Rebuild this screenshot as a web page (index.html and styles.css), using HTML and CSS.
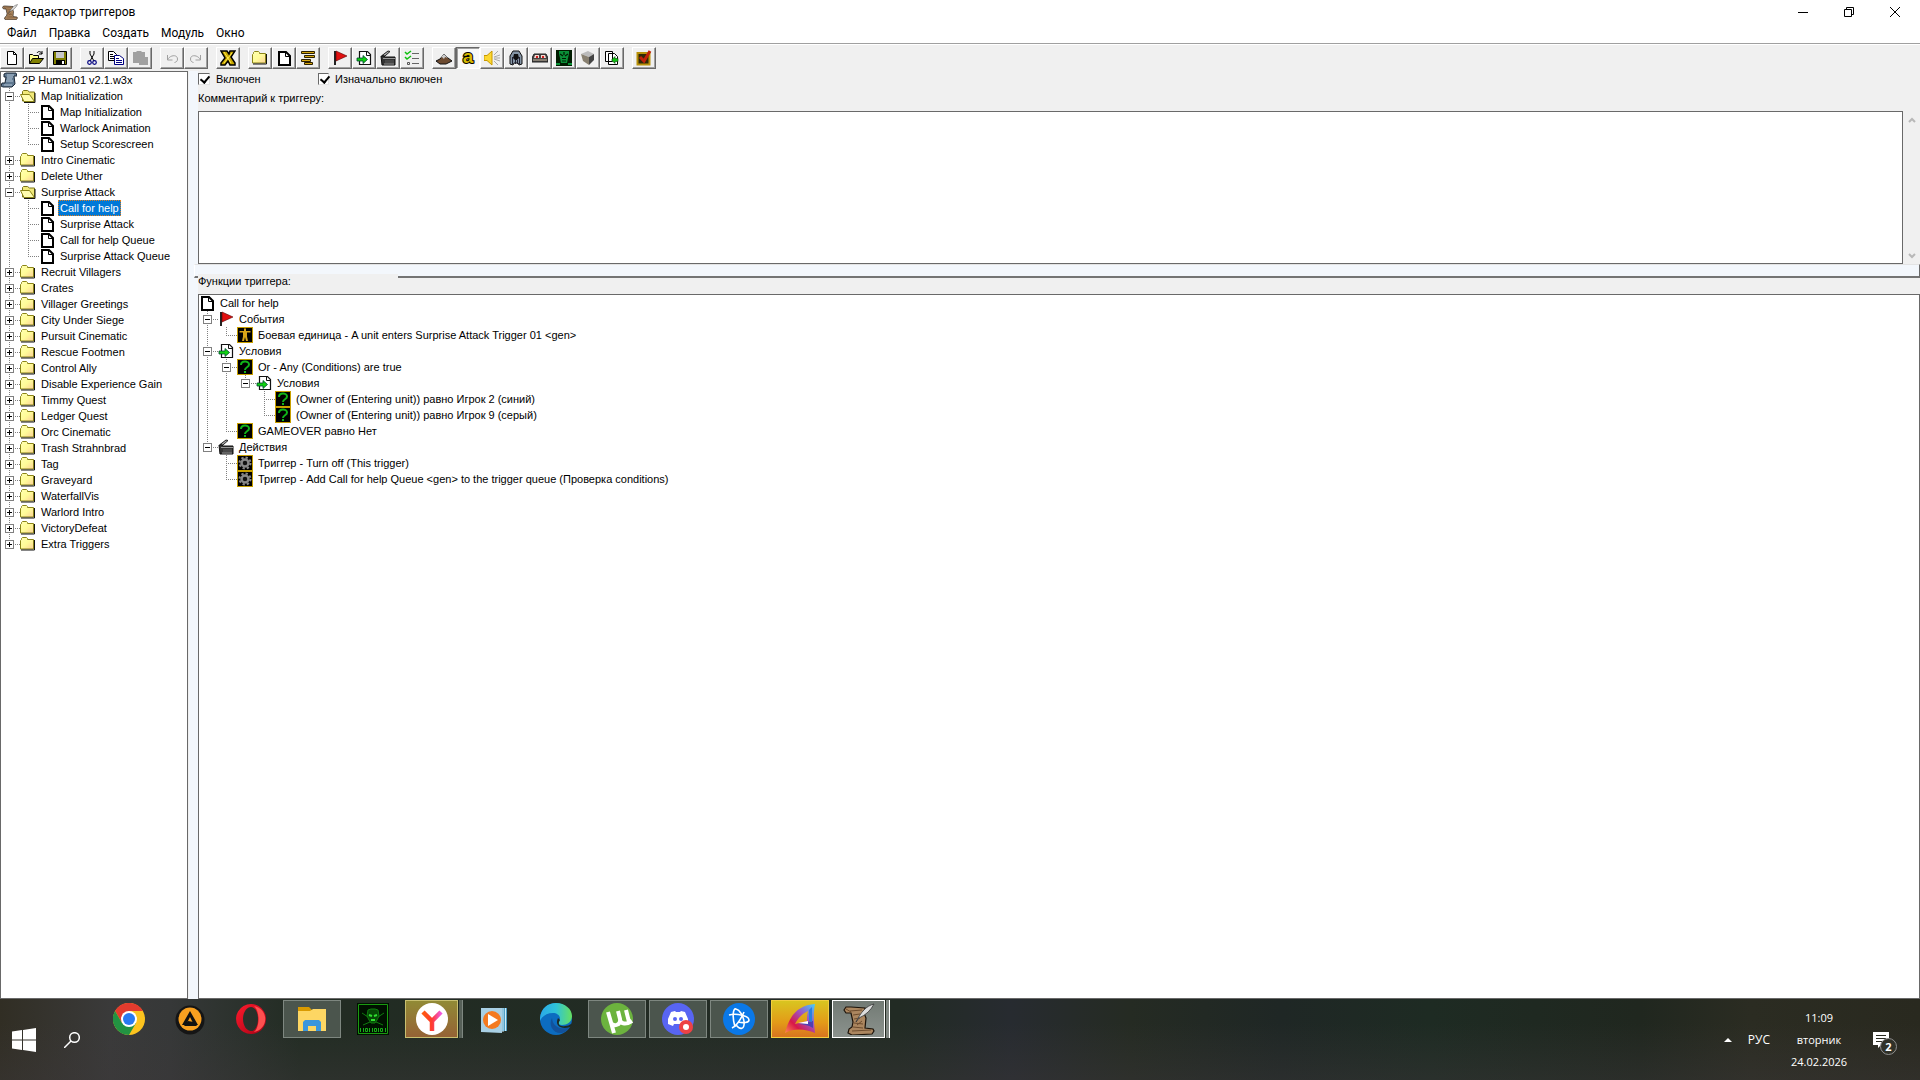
FILE: index.html
```
<!DOCTYPE html>
<html lang="ru">
<head>
    <meta charset="UTF-8">
    <meta name="viewport" content="width=device-width, initial-scale=1.0">
    <title>Редактор триггеров</title>
    <link rel="stylesheet" href="styles.css">
</head>
<body>

<!-- shared icons -->
<svg class="sprite" aria-hidden="true">
    <defs>
        <linearGradient id="gGold" x1="0" y1="0" x2="1" y2="1"><stop offset="0" stop-color="#ffffb0"/><stop offset=".5" stop-color="#fffc98"/><stop offset="1" stop-color="#fcd098"/></linearGradient>
        <linearGradient id="gOpera" x1="0" y1="0" x2="1" y2="1"><stop offset="0" stop-color="#ff1b2d"/><stop offset="1" stop-color="#a70014"/></linearGradient>
        <linearGradient id="gEdge" x1="0" y1="0" x2="1" y2="0"><stop offset="0" stop-color="#2aa8e8"/><stop offset=".5" stop-color="#2fc3d8"/><stop offset="1" stop-color="#66e060"/></linearGradient>
        <linearGradient id="gYan" x1="0" y1="0" x2="1" y2="0"><stop offset="0" stop-color="#ff5a10"/><stop offset=".5" stop-color="#ff3b30"/><stop offset="1" stop-color="#f05ae0"/></linearGradient>
        <linearGradient id="gSail" x1="0" y1="1" x2="1" y2="0"><stop offset="0" stop-color="#ff8a50"/><stop offset=".3" stop-color="#d81848"/><stop offset=".6" stop-color="#a050c0"/><stop offset="1" stop-color="#40d0ff"/></linearGradient>
    </defs>
    <symbol id="folder" viewBox="0 0 16 16">
        <path d="M.5 4.500l1-1V2.500l1-1h4l1 1v1h6v9.500H.5z" fill="url(#gGold)" stroke="#8a8418"/>
        <path d="M1 14h13.500V4" fill="none" stroke="#111"/>
    </symbol>
    <symbol id="folder-open" viewBox="0 0 16 16">
        <path d="M2.500 13V3.500l1-1h4l2 1.500h5V13z" fill="#f0e878" stroke="#7a7418"/>
        <path d="M.5 6.500h9l5 7H4z" fill="#fffcb0" stroke="#8a8418"/>
        <path d="M4 14.500h11V5" fill="none" stroke="#111"/>
    </symbol>
    <symbol id="doc" viewBox="0 0 16 16">
        <path d="M3 2h7l4 4v9H3z" fill="#fff" stroke="#000" stroke-width="2"/>
        <path d="M9.500 2v4.500H14" fill="none" stroke="#000"/>
    </symbol>
    <symbol id="page" viewBox="0 0 16 16">
        <path d="M3.500 1.500h6l3 3v10h-9z" fill="#fff" stroke="#000"/>
        <path d="M9.500 1.500v3h3" fill="none" stroke="#000"/>
    </symbol>
    <symbol id="flag" viewBox="0 0 16 16">
        <path d="M2 1h2v14H2z" fill="#222"/><path d="M4 1l11 5-11 5z" fill="#e01010" stroke="#500" stroke-width=".6"/>
    </symbol>
    <symbol id="cond" viewBox="0 0 16 16">
        <path d="M3.500 1.500h8l3 3v10h-11z" fill="#fff" stroke="#111" stroke-width="1.200"/>
        <path d="M10.500 2v3.500H14" fill="none" stroke="#111"/>
        <path d="M1 8h6V5.500l4.500 4-4.500 4v-2.500H1z" fill="#10d010" stroke="#043" stroke-width=".8"/>
    </symbol>
    <symbol id="clap" viewBox="0 0 16 16">
        <path d="M2 5.500l6-4.500 2 .5L5 6z" fill="#aaa" stroke="#222"/>
        <path d="M1 6h3l1 1h10v8H2z" fill="#333" stroke="#111"/>
        <path d="M3 8.500h12M4 14h10" stroke="#999"/><path d="M5 10h9v3H5z" fill="#484848"/>
    </symbol>
    <symbol id="quest" viewBox="0 0 16 16">
        <rect x=".5" y=".5" width="15" height="15" fill="#000" stroke="#c8a000"/>
        <path d="M4 6c0-4.500 8-4.500 8-.5 0 3-4 2.500-4 5.500" fill="none" stroke="#10b418" stroke-width="2"/>
        <path d="M7 12h2v2H7z" fill="#10b418"/>
    </symbol>
    <symbol id="unit" viewBox="0 0 16 16">
        <rect x=".5" y=".5" width="15" height="15" fill="#000" stroke="#c8a000"/>
        <path d="M7 1.500h2v2.500h4.500v1.500H10v4l1 4.500H9L8 10l-1 4H5l1-4.500v-4H2.500V4H7z" fill="#d8a418"/>
    </symbol>
    <symbol id="gear" viewBox="0 0 16 16">
        <rect x=".5" y=".5" width="15" height="15" fill="#000" stroke="#c8a000"/>
        <circle cx="8" cy="8" r="5.500" fill="none" stroke="#888" stroke-width="2" stroke-dasharray="2.300 2"/>
        <circle cx="8" cy="8" r="3.500" fill="#111" stroke="#888" stroke-width="2.500"/>
    </symbol>
    <symbol id="map" viewBox="0 0 16 16">
        <path d="M3 2l2-1h10l1 3h-3l1 8-3 3H2l-2-1 1-3h3L5 5H3z" fill="#5f7890" stroke="#1c2836"/>
        <path d="M6 3h7M6 5h6M6 7h5M5 9h7M3 13h8" stroke="#b4c4d4"/>
    </symbol>
    <symbol id="scroll" viewBox="0 0 32 32">
        <path d="M1 7l2-3h5l14 1-1 5 2 5-1 10 8 1 1 2-2 3-20 1-4-2 1-4 3-2 1-5-2-9H3z" fill="#ab865f" stroke="#1c130a" stroke-width="1.200"/>
        <path d="M7 8l12-1M10 12l7-1M11 16l6-1M11 20l9 1M10 24l10 1M9 28l19-1M3 6l5 3M14 22l5-4" stroke="#6d4c2e" fill="none"/>
        <path d="M13 19C18 9 23 3 31 1c-3 6-8 11-15 14z" fill="#ddd" stroke="#333" stroke-width=".8"/>
    </symbol>
</svg>

<header class="titlebar">
    <svg class="icon"><use href="#scroll"/></svg>
    <h1>Редактор триггеров</h1>
    <div class="window-buttons">
        <button aria-label="Свернуть"><svg viewBox="0 0 10 10"><path d="M0 5.500h10"/></svg></button>
        <button aria-label="Развернуть"><svg viewBox="0 0 10 10"><path d="M.5 2.500h7v7h-7zM2.500 2.500v-2h7v7h-2"/></svg></button>
        <button aria-label="Закрыть"><svg viewBox="0 0 10 10"><path d="M0 0l10 10M10 0L0 10"/></svg></button>
    </div>
</header>

<nav class="menu">
    <button>Файл</button>
    <button>Правка</button>
    <button>Создать</button>
    <button>Модуль</button>
    <button>Окно</button>
</nav>

<div class="toolbar">
    <div class="group">
        <button aria-label="Новый"><svg class="icon"><use href="#page"/></svg></button>
        <button aria-label="Открыть"><svg class="icon" viewBox="0 0 16 16"><path d="M1.500 13.500v-9h3l1 1h5v3" fill="#ffff90" stroke="#000"/><path d="M1.500 13.500l3-5h11l-4 5z" fill="#808000" stroke="#000"/><path d="M9 3c1-2 4-2 5 1m0-3v3h-3" fill="none" stroke="#000"/></svg></button>
        <button aria-label="Сохранить"><svg class="icon" viewBox="0 0 16 16"><path d="M1.500 1.500h13v13h-13z" fill="#808000" stroke="#000"/><path d="M4 2h8v6H4z" fill="#c8c8c8"/><path d="M4 10h9v4H4z" fill="#000"/><path d="M10 11h2v3h-2z" fill="#fff"/></svg></button>
    </div>
    <div class="group">
        <button aria-label="Вырезать"><svg class="icon" viewBox="0 0 16 16"><path d="M6 1v3l4 7M10 1v3L6 11" fill="none" stroke="#000"/><circle cx="5.500" cy="12.500" r="1.800" fill="none" stroke="#000080" stroke-width="1.200"/><circle cx="10.500" cy="12.500" r="1.800" fill="none" stroke="#000080" stroke-width="1.200"/></svg></button>
        <button aria-label="Копировать"><svg class="icon" viewBox="0 0 16 16"><path d="M.5 1.500h5l3 3v6h-8z" fill="#fff" stroke="#000"/><path d="M2 4.500h3M2 6.500h4M2 8.500h4" stroke="#000"/><path d="M6.500 5.500h5l4 3v6h-9z" fill="#fff" stroke="#000080"/><path d="M8 8.500h3M8 10.500h6M8 12.500h6" stroke="#000080"/></svg></button>
        <button aria-label="Вставить" disabled><svg class="icon" viewBox="0 0 16 16"><path d="M1 2h3l1-1h4l1 1h3v5h3v8H7v-2H1z" fill="#a0a0a0"/></svg></button>
    </div>
    <div class="group">
        <button aria-label="Отменить" disabled><svg class="icon" viewBox="0 0 16 16"><path d="M3.500 5v5h5M3.500 10c2-5 10-6 10-1 0 2-1 3-3 3.500" fill="none" stroke="#a0a0a0"/></svg></button>
        <button aria-label="Повторить" disabled><svg class="icon" viewBox="0 0 16 16"><path d="M12.500 5v5h-5M12.500 10c-2-5-10-6-10-1 0 2 1 3 3 3.500" fill="none" stroke="#a0a0a0"/></svg></button>
    </div>
    <div class="group">
        <button aria-label="Переменные"><svg class="icon" viewBox="0 0 16 16"><path d="M1 1h6l2 3 1-3h5l-4 6 4 6v2h-5l-2-4-3 4H1v-2l4-5z" fill="#c8a800" stroke="#000" stroke-width="1.500"/><path d="M4 2l7 11M12 3L4 13" stroke="#ffe850" stroke-width="1"/></svg></button>
    </div>
    <div class="group">
        <button aria-label="Категория"><svg class="icon"><use href="#folder"/></svg></button>
        <button aria-label="Триггер"><svg class="icon"><use href="#doc"/></svg></button>
        <button aria-label="Комментарий"><svg class="icon" viewBox="0 0 16 16"><path d="M1.500 1.500h13v2h-13zM4.500 5.500h10v2h-10zM1.500 9.500h9v2h-9zM4.500 12.500h8v2h-8z" fill="#d8a810" stroke="#2c2000"/></svg></button>
    </div>
    <div class="group">
        <button aria-label="Событие"><svg class="icon"><use href="#flag"/></svg></button>
        <button aria-label="Условие"><svg class="icon"><use href="#cond"/></svg></button>
        <button aria-label="Действие"><svg class="icon"><use href="#clap"/></svg></button>
        <button aria-label="Список"><svg class="icon" viewBox="0 0 16 16"><path d="M1 2l2 2 4-3M1 7l2 2 4-3" fill="none" stroke="#10c010" stroke-width="1.500"/><path d="M8 3.500h7M8 8.500h7M8 13.500h7" stroke="#666"/><path d="M3.500 12.500h2v2h-2z" fill="none" stroke="#555"/></svg></button>
    </div>
    <div class="group">
        <button aria-label="Рельеф"><svg class="icon" viewBox="0 0 16 16"><path d="M0 11l4-2 4-5 4 4 4 3-6 3H4z" fill="#6c4a30" stroke="#111"/><path d="M8 4l4 4-3-1-1 2-2-2-2 1z" fill="#ccc"/></svg></button>
        <button class="pressed letter" aria-label="Редактор триггеров">a</button>
        <button aria-label="Звуки"><svg class="icon" viewBox="0 0 16 16"><path d="M0 5.500h3L8 1v14l-5-4.500H0z" fill="#fcd830" stroke="#c89800"/><path d="M10 5l4-4M10 8h6M10 11l4 4M10 7l6-2M10 9l6 2" stroke="#aaa"/></svg></button>
        <button aria-label="Объекты"><svg class="icon" viewBox="0 0 16 16"><path d="M5 1h6l3 5v8l-3 1-1-2H6l-1 2-3-1V6z" fill="#8595a5" stroke="#111"/><path d="M6 4h4l1 4-2 2H7L5 8z" fill="#111"/><path d="M4.500 7v7M11.500 7v7M7.500 10v4M9.500 10v4" stroke="#223"/></svg></button>
        <button aria-label="Кампания"><svg class="icon" viewBox="0 0 16 16"><path d="M2 4h12l2 4v4H0V8z" fill="#444" stroke="#222"/><path d="M3 5h4v3H2zM9 5h4l1 3H9z" fill="#f4d8d0"/><path d="M4 6h2v2H4zM10 6h2v2h-2z" fill="#d02020"/><path d="M1 10h14" stroke="#c8b8a0"/></svg></button>
        <button aria-label="ИИ"><svg class="icon" viewBox="0 0 16 16"><path d="M0 0h16v16H0z" fill="#001c00"/><path d="M3 1h10v3l-1 4-1 5H5L4 8 3 4zM0 13h4v2H0zM12 13h4v2h-4z" fill="#0a9038"/><path d="M4 4l3 2M12 4L9 6M6 8.500h4M6 11h4M8 2v3" stroke="#001c00" stroke-width="1.200"/></svg></button>
        <button aria-label="Менеджер объектов"><svg class="icon" viewBox="0 0 16 16"><path d="M1 4l7-3 6 3-5 3z" fill="#bbb"/><path d="M1 4l8 3v8l-6-4z" fill="#888070"/><path d="M14 4l-5 3v8l5-5z" fill="#444"/></svg></button>
        <button aria-label="Импорт"><svg class="icon" viewBox="0 0 16 16"><path d="M1.500 1.500h7v10h-7zM4.500 3.500h6l3 3v8h-9z" fill="#fff" stroke="#000"/><path d="M14 8.500h-3V6.500l-3.500 3.500 3.500 3.500v-2h3z" fill="#10c010" stroke="#040" stroke-width=".6"/></svg></button>
    </div>
    <div class="group">
        <button aria-label="Проверка карты"><svg class="icon" viewBox="0 0 16 16"><path d="M1.500 3h12v11.500h-12z" fill="#302808" stroke="#b89008" stroke-width="2"/><path d="M4 7l4 4 6-10" fill="none" stroke="#c02008" stroke-width="3"/></svg></button>
    </div>
</div>

<main class="workspace">
    <aside class="panel trigger-list">
        <div class="tree">
            <div class="row"><svg class="icon"><use href="#map"/></svg><span>2P Human01 v2.1.w3x</span></div>
            <ul>
                <li>
                    <div class="row"><button class="toggle" aria-label="Свернуть"></button><svg class="icon"><use href="#folder-open"/></svg><span>Map Initialization</span></div>
                    <ul>
                        <li><div class="row"><svg class="icon"><use href="#doc"/></svg><span>Map Initialization</span></div></li>
                        <li><div class="row"><svg class="icon"><use href="#doc"/></svg><span>Warlock Animation</span></div></li>
                        <li><div class="row"><svg class="icon"><use href="#doc"/></svg><span>Setup Scorescreen</span></div></li>
                    </ul>
                </li>
                <li><div class="row"><button class="toggle closed" aria-label="Развернуть"></button><svg class="icon"><use href="#folder"/></svg><span>Intro Cinematic</span></div></li>
                <li><div class="row"><button class="toggle closed" aria-label="Развернуть"></button><svg class="icon"><use href="#folder"/></svg><span>Delete Uther</span></div></li>
                <li>
                    <div class="row"><button class="toggle" aria-label="Свернуть"></button><svg class="icon"><use href="#folder-open"/></svg><span>Surprise Attack</span></div>
                    <ul>
                        <li><div class="row"><svg class="icon"><use href="#doc"/></svg><span class="selected">Call for help</span></div></li>
                        <li><div class="row"><svg class="icon"><use href="#doc"/></svg><span>Surprise Attack</span></div></li>
                        <li><div class="row"><svg class="icon"><use href="#doc"/></svg><span>Call for help Queue</span></div></li>
                        <li><div class="row"><svg class="icon"><use href="#doc"/></svg><span>Surprise Attack Queue</span></div></li>
                    </ul>
                </li>
                <li><div class="row"><button class="toggle closed" aria-label="Развернуть"></button><svg class="icon"><use href="#folder"/></svg><span>Recruit Villagers</span></div></li>
                <li><div class="row"><button class="toggle closed" aria-label="Развернуть"></button><svg class="icon"><use href="#folder"/></svg><span>Crates</span></div></li>
                <li><div class="row"><button class="toggle closed" aria-label="Развернуть"></button><svg class="icon"><use href="#folder"/></svg><span>Villager Greetings</span></div></li>
                <li><div class="row"><button class="toggle closed" aria-label="Развернуть"></button><svg class="icon"><use href="#folder"/></svg><span>City Under Siege</span></div></li>
                <li><div class="row"><button class="toggle closed" aria-label="Развернуть"></button><svg class="icon"><use href="#folder"/></svg><span>Pursuit Cinematic</span></div></li>
                <li><div class="row"><button class="toggle closed" aria-label="Развернуть"></button><svg class="icon"><use href="#folder"/></svg><span>Rescue Footmen</span></div></li>
                <li><div class="row"><button class="toggle closed" aria-label="Развернуть"></button><svg class="icon"><use href="#folder"/></svg><span>Control Ally</span></div></li>
                <li><div class="row"><button class="toggle closed" aria-label="Развернуть"></button><svg class="icon"><use href="#folder"/></svg><span>Disable Experience Gain</span></div></li>
                <li><div class="row"><button class="toggle closed" aria-label="Развернуть"></button><svg class="icon"><use href="#folder"/></svg><span>Timmy Quest</span></div></li>
                <li><div class="row"><button class="toggle closed" aria-label="Развернуть"></button><svg class="icon"><use href="#folder"/></svg><span>Ledger Quest</span></div></li>
                <li><div class="row"><button class="toggle closed" aria-label="Развернуть"></button><svg class="icon"><use href="#folder"/></svg><span>Orc Cinematic</span></div></li>
                <li><div class="row"><button class="toggle closed" aria-label="Развернуть"></button><svg class="icon"><use href="#folder"/></svg><span>Trash Strahnbrad</span></div></li>
                <li><div class="row"><button class="toggle closed" aria-label="Развернуть"></button><svg class="icon"><use href="#folder"/></svg><span>Tag</span></div></li>
                <li><div class="row"><button class="toggle closed" aria-label="Развернуть"></button><svg class="icon"><use href="#folder"/></svg><span>Graveyard</span></div></li>
                <li><div class="row"><button class="toggle closed" aria-label="Развернуть"></button><svg class="icon"><use href="#folder"/></svg><span>WaterfallVis</span></div></li>
                <li><div class="row"><button class="toggle closed" aria-label="Развернуть"></button><svg class="icon"><use href="#folder"/></svg><span>Warlord Intro</span></div></li>
                <li><div class="row"><button class="toggle closed" aria-label="Развернуть"></button><svg class="icon"><use href="#folder"/></svg><span>VictoryDefeat</span></div></li>
                <li><div class="row"><button class="toggle closed" aria-label="Развернуть"></button><svg class="icon"><use href="#folder"/></svg><span>Extra Triggers</span></div></li>
            </ul>
        </div>
    </aside>

    <div class="splitter-v"></div>

    <section class="editor">
        <div class="checks">
            <label><input type="checkbox" checked>Включен</label>
            <label><input type="checkbox" checked>Изначально включен</label>
        </div>
        <label class="caption" for="comment">Комментарий к триггеру:</label>
        <div class="comment">
            <textarea id="comment"></textarea>
            <div class="scrollbar">
                <svg viewBox="0 0 8 6"><path d="M1 5l3-3 3 3"/></svg>
                <svg viewBox="0 0 8 6"><path d="M1 1l3 3 3-3"/></svg>
            </div>
        </div>
        <div class="splitter-h"></div>
        <h2 class="caption functions-title">Функции триггера:</h2>
        <div class="panel functions">
            <div class="tree">
                <div class="row"><svg class="icon"><use href="#doc"/></svg><span>Call for help</span></div>
                <ul>
                    <li>
                        <div class="row"><button class="toggle" aria-label="Свернуть"></button><svg class="icon"><use href="#flag"/></svg><span>События</span></div>
                        <ul>
                            <li><div class="row"><svg class="icon"><use href="#unit"/></svg><span>Боевая единица - A unit enters Surprise Attack Trigger 01 &lt;gen&gt;</span></div></li>
                        </ul>
                    </li>
                    <li>
                        <div class="row"><button class="toggle" aria-label="Свернуть"></button><svg class="icon"><use href="#cond"/></svg><span>Условия</span></div>
                        <ul>
                            <li>
                                <div class="row"><button class="toggle" aria-label="Свернуть"></button><svg class="icon"><use href="#quest"/></svg><span>Or - Any (Conditions) are true</span></div>
                                <ul>
                                    <li>
                                        <div class="row"><button class="toggle" aria-label="Свернуть"></button><svg class="icon"><use href="#cond"/></svg><span>Условия</span></div>
                                        <ul>
                                            <li><div class="row"><svg class="icon"><use href="#quest"/></svg><span>(Owner of (Entering unit)) равно Игрок 2 (синий)</span></div></li>
                                            <li><div class="row"><svg class="icon"><use href="#quest"/></svg><span>(Owner of (Entering unit)) равно Игрок 9 (серый)</span></div></li>
                                        </ul>
                                    </li>
                                </ul>
                            </li>
                            <li><div class="row"><svg class="icon"><use href="#quest"/></svg><span>GAMEOVER равно Нет</span></div></li>
                        </ul>
                    </li>
                    <li>
                        <div class="row"><button class="toggle" aria-label="Свернуть"></button><svg class="icon"><use href="#clap"/></svg><span>Действия</span></div>
                        <ul>
                            <li><div class="row"><svg class="icon"><use href="#gear"/></svg><span>Триггер - Turn off (This trigger)</span></div></li>
                            <li><div class="row"><svg class="icon"><use href="#gear"/></svg><span>Триггер - Add Call for help Queue &lt;gen&gt; to the trigger queue (Проверка conditions)</span></div></li>
                        </ul>
                    </li>
                </ul>
            </div>
        </div>
    </section>
</main>

<footer class="taskbar">
    <button class="start" aria-label="Пуск"><svg viewBox="0 0 24 24"><path d="M0 3.500l10-1.500v9.500H0zM11 2l13-2v11.500H11zM0 12.500h10V22L0 20.500zM11 12.500h13V24l-13-2z" fill="#fff"/></svg></button>
    <button class="start" aria-label="Поиск"><svg class="search" viewBox="0 0 16 16"><circle cx="10.500" cy="5.500" r="4.800"/><path d="M7 9l-7 7"/></svg></button>
    <div class="apps">
        <button aria-label="Chrome"><svg viewBox="0 0 32 32"><circle cx="16" cy="16" r="16" fill="#fcc31e"/><path d="M2.100 8A16 16 0 0 1 29.900 8H16l-7 12z" fill="#e33b2e"/><path d="M2.100 8A16 16 0 0 0 16 32l7-12H9z" fill="#229342"/><circle cx="16" cy="16" r="8" fill="#fff"/><circle cx="16" cy="16" r="6" fill="#2a7af0"/></svg></button>
        <button aria-label="AIMP"><svg viewBox="0 0 32 32"><circle cx="16" cy="17" r="14.500" fill="#151515"/><circle cx="16" cy="16" r="11.500" fill="#f8a020"/><path d="M16 8l8 14h-4l-4-8-4 8H8z" fill="#111"/><path d="M14 18l6 1 3 4H10z" fill="#111"/></svg></button>
        <button aria-label="Opera"><svg viewBox="0 0 32 32"><path fill-rule="evenodd" d="M16 1a15 15 0 1 0 .1 0zM16 4c4 0 7 5 7 12s-3 12-7 12-8-5-8-12 4-12 8-12z" fill="url(#gOpera)"/><path d="M19 3c15 3 15 23 0 26 6-5 6-21 0-26z" fill="#ff5050"/></svg></button>
        <button class="open" aria-label="Проводник"><svg viewBox="0 0 32 32"><path d="M2 4h11l3 3h14v20H2z" fill="#d99a00"/><path d="M2 8h12l3-2h13v22H2z" fill="#fdd663"/><path d="M7 28V19l2-2h14l2 2v9h-5v-5h-8v5z" fill="#3a96dd"/></svg></button>
        <button aria-label="Matrix"><svg viewBox="0 0 32 32"><path d="M0 0h32v32H0z" fill="#010"/><path d="M1.500 1.500h29v29h-29z" fill="none" stroke="#1a9a10"/><path d="M11 7l3-1h4l3 1 1 6-2 4-2 3h-4l-2-3-2-4zM5 10l6 4M27 10l-6 4M6 22l7-3M26 22l-7-3" fill="#064a06" stroke="#0e7c0e"/><path d="M12 12l3 1M20 12l-3 1M14 17h4" stroke="#30e030" stroke-width="2"/><path d="M3.500 25v4M6.500 25v4M8.500 25.500h2v3h-2zM12.500 25v4M15.500 25v4M17.500 25.500h2v3h-2zM21.500 25v4M23.500 25.500h2v3h-2zM28.500 25v4" fill="none" stroke="#18b018"/></svg></button>
        <button class="open stacked yandex" aria-label="Яндекс"><svg viewBox="0 0 32 32"><circle cx="16" cy="16" r="16" fill="#fff"/><path d="M7 9l9 9 9-9M16 17v11" fill="none" stroke="url(#gYan)" stroke-width="4.500"/></svg></button>
        <button aria-label="Проигрыватель"><svg viewBox="0 0 32 32"><path d="M8 5h20v23H8z" fill="#4e9ec4"/><path d="M26.500 5v23M24 5v24" stroke="#d4edf8"/><path d="M2 5h21v25L2 29z" fill="#a8d0e4"/><circle cx="13" cy="17" r="9" fill="#f47a20"/><path d="M9 11l10 6-10 6z" fill="#fff"/></svg></button>
        <button aria-label="Edge"><svg viewBox="0 0 32 32"><circle cx="16" cy="16" r="16" fill="#0c6cc0"/><path d="M0 15C1 5 8 0 16 0c9 0 16 6 16 13 0 6-5 9-10 9-3 0-4-1-3-3 3-5-1-9-6-9-6 0-11 3-13 8z" fill="url(#gEdge)"/><path d="M12 15c-4 7 1 16 10 15 4-1 6-3 8-6-8 3-17 1-18-9z" fill="#12529c"/><path d="M20 17c-3 4 0 7 5 6 3 0 4-1 6-2l1 1-2 2c-8 3-16-1-12-9z" fill="#1e2a22"/></svg></button>
        <button class="open" aria-label="uTorrent"><svg viewBox="0 0 32 32"><circle cx="16" cy="16" r="16" fill="#6cb33e"/><path d="M7 9l6 21M10 20c3 4 10 2 9-4L17 8M19 17c1 4 6 5 12 1M25 7l3 12" fill="none" stroke="#fff" stroke-width="4"/></svg></button>
        <button class="open" aria-label="Discord"><svg viewBox="0 0 32 32"><circle cx="16" cy="16" r="16" fill="#5865f2"/><path d="M9 9l4-1 1 1h4l1-1 4 1 3 7v5l-5 2-1-2h-8l-1 2-5-2v-5z" fill="#fff"/><circle cx="13" cy="16" r="2" fill="#5865f2"/><circle cx="19" cy="16" r="2" fill="#5865f2"/><circle cx="24" cy="24" r="7" fill="#ed4245"/><circle cx="24" cy="24" r="3" fill="#fff"/></svg></button>
        <button class="open" aria-label="Battle.net"><svg viewBox="0 0 32 32"><circle cx="16" cy="16" r="16" fill="#0a78e8"/><g fill="none" stroke="#fff" stroke-width="1.600"><path d="M12 24C9 14 10 5 13 6c4 1 7 7 8 12"/><path d="M6 12c8-2 20 1 20 5 0 3-6 3-11 2"/><path d="M21 9c-3 7-8 14-12 16M13 22c4 5 9 5 8-4"/></g></svg></button>
        <button class="open orange" aria-label="Лаунчер"><svg viewBox="0 0 32 32"><path fill-rule="evenodd" d="M31 1C14 2 5 13 1 30c10-5 20-4 30 0-1-10-2-19 0-29zM24 8c-1 4-1 7-1 10l-12 3c3-6 7-10 13-13z" fill="url(#gSail)"/><path d="M14 21l15-3v7c-5-3-10-4-15-4z" fill="#5040b0"/><path d="M14 20l10-2v3z" fill="#fff"/><path d="M25 7l3-3v15l-3-1z" fill="#2880e0"/></svg></button>
        <button class="open stacked active" aria-label="Редактор"><svg><use href="#scroll"/></svg></button>
    </div>
    <div class="tray">
        <button aria-label="Показать значки"><svg class="caret" viewBox="0 0 8 4"><path d="M0 4l4-4 4 4z" fill="#fff"/></svg></button>
        <button class="lang">РУС</button>
        <time class="clock" datetime="2026-02-24T11:09"><span>11:09</span><span>вторник</span><span>24.02.2026</span></time>
        <button class="notify" aria-label="Уведомления"><svg viewBox="0 0 16 16"><path d="M0 0h16v13H8l-3 3v-3H0z" fill="#fff"/><path d="M3 3.500h10M3 6.500h10M3 9.500h7" stroke="#2b2c22"/></svg><span class="badge">2</span></button>
    </div>
</footer>

</body>
</html>
```
FILE: styles.css
```
* {
    box-sizing: border-box;
}

body {
    display: flex;
    flex-direction: column;
    height: 100vh;
    margin: 0;
    overflow: hidden;
    background-color: #f0f0f0;
    color: #000;
    font-family: "Liberation Sans", Arial, sans-serif;
    font-size: 11px;
}

button {
    display: flex;
    align-items: center;
    justify-content: center;
    padding: 0;
    border: none;
    background: none;
    color: inherit;
    font: inherit;
}

.sprite {
    position: absolute;
    width: 0;
    height: 0;
}

.icon {
    width: 16px;
    height: 16px;
    flex-shrink: 0;
}

/* title bar and menu */
.titlebar {
    display: flex;
    align-items: center;
    gap: 5px;
    height: 23px;
    padding: 0 2px;
    background-color: #fff;
    font-family: Roboto, sans-serif;
}

.titlebar h1 {
    margin: 0;
    font-size: 12px;
    font-weight: normal;
}

.window-buttons {
    display: flex;
    margin-left: auto;
}

.window-buttons button {
    width: 46px;
    height: 20px;
}

.window-buttons svg {
    width: 10px;
    height: 10px;
    fill: none;
    stroke: #000;
}

.menu {
    display: flex;
    height: 20px;
    padding-left: 1px;
    background-color: #fff;
    font-family: Roboto, sans-serif;
    font-size: 12px;
}

.menu button {
    padding: 0 6px;
}

/* toolbar */
.toolbar {
    display: flex;
    gap: 8px;
    height: 28px;
    padding-top: 3px;
    border-top: 1px solid #a0a0a0;
    box-shadow: inset 0 1px #fff;
}

.group {
    display: flex;
}

.group button {
    width: 24px;
    height: 22px;
    border: 1px solid;
    border-color: #fff #696969 #696969 #fff;
    box-shadow: inset -1px -1px #a0a0a0;
}

.group .pressed {
    border-color: #696969 #fff #fff #696969;
    background-color: #f8f8f8;
    box-shadow: inset 1px 1px #a0a0a0;
}

.group .letter {
    padding-bottom: 3px;
    color: #d8b800;
    font-size: 19px;
    font-weight: bold;
    line-height: 20px;
    -webkit-text-stroke: 2px #000;
    paint-order: stroke fill;
}

/* workspace */
.workspace {
    display: flex;
    flex: 1;
    min-height: 0;
}

.panel {
    border: 1px solid #696969;
    background-color: #fff;
}

.trigger-list {
    width: 188px;
    overflow: hidden;
}

.splitter-v {
    width: 10px;
    border-left: 1px solid #f0f0f0;
    background-color: #f3f7fc;
}

.editor {
    display: flex;
    flex: 1;
    flex-direction: column;
    min-width: 0;
}

.tree ul {
    margin: 0;
    padding: 0;
    list-style: none;
}

/* dotted guides: vertical line, then the stub to the icon */
.tree li {
    padding-left: 19px;
    background:
        repeating-linear-gradient(to bottom, #808080 0 1px, transparent 1px 2px) 8px 0 / 1px 100% no-repeat,
        repeating-linear-gradient(to right, #808080 0 1px, transparent 1px 2px) 8px 8px / 11px 1px no-repeat;
}

.tree li:last-child {
    background-size: 1px 8px, 11px 1px;
}

.row {
    display: flex;
    align-items: center;
    height: 16px;
    white-space: nowrap;
}

.row span {
    margin-left: 3px;
    padding: 0 2px;
    line-height: 16px;
}

.row .selected {
    outline: 1px dotted #e08020;
    outline-offset: -1px;
    background-color: #0078d7;
    color: #fff;
}

.toggle {
    width: 9px;
    height: 9px;
    margin-left: -15px;
    margin-right: 6px;
    border: 1px solid #808080;
    background: linear-gradient(#000, #000) center / 5px 1px no-repeat #fff;
}

.toggle.closed {
    background:
        linear-gradient(#000, #000) center / 5px 1px no-repeat,
        linear-gradient(#000, #000) center / 1px 5px no-repeat,
        #fff;
}

.checks {
    display: flex;
    height: 18px;
}

.checks label {
    display: flex;
    align-items: center;
    width: 120px;
    height: 16px;
    gap: 6px;
    white-space: nowrap;
}

.checks input {
    width: 12px;
    height: 12px;
    margin: 0;
    appearance: none;
    border: 1px solid;
    border-color: #696969 #e3e3e3 #e3e3e3 #696969;
    background-color: #fff;
}

.checks input:checked::before {
    content: "";
    display: block;
    width: 4px;
    height: 7px;
    margin-left: 3px;
    border: solid #000;
    border-width: 0 2px 2px 0;
    transform: rotate(40deg);
}

.caption {
    display: block;
    height: 22px;
    margin: 0;
    font-size: 11px;
    font-weight: normal;
    line-height: 18px;
}

.comment {
    display: flex;
    height: 153px;
}

.comment textarea {
    flex: 1;
    border: 1px solid #696969;
    border-radius: 0;
    outline: none;
    resize: none;
    background-color: #fff;
    font: inherit;
}

.scrollbar {
    display: flex;
    flex-direction: column;
    align-items: center;
    justify-content: space-between;
    width: 17px;
    padding: 6px 0 5px;
}

.scrollbar svg {
    width: 8px;
    height: 6px;
    fill: none;
    stroke: #b8b8b8;
    stroke-width: 2;
}

.splitter-h {
    height: 14px;
    margin-left: -4px;
    border: solid;
    border-width: 1px 1px 2px;
    border-color: #e3e3e3 #696969 #747474 #fff;
    background-color: #f3f7fc;
}

/* the caption covers the left part of the splitter edge */
.functions-title {
    z-index: 1;
    width: 200px;
    height: 20px;
    margin-top: -4px;
    background-color: #f0f0f0;
    line-height: 14px;
}

.functions {
    flex: 1;
    min-height: 0;
}

/* taskbar */
.taskbar {
    display: flex;
    height: 81px;
    background:
        linear-gradient(to bottom, transparent 30%, rgba(60, 56, 58, 0.4)),
        linear-gradient(to right, #312e24 0, #3a3a3a 110px, #363838 170px, #222c23 300px, #222b24 900px, #272b30 1010px, #252b23 1130px, #1f2725 1280px, #1e2b23 1430px, #20271f 1640px, #2b2c22 1750px, #29291f 100%);
    color: #fff;
    font-family: "Open Sans", sans-serif;
    font-size: 11px;
}

.start {
    width: 48px;
}

.start svg {
    width: 24px;
    height: 24px;
}

.start .search {
    width: 16px;
    height: 16px;
    fill: none;
    stroke: #fff;
    stroke-width: 1.5px;
}

.apps {
    display: flex;
    gap: 3px;
    padding: 1px 0 0 4px;
}

.apps button {
    width: 58px;
    height: 38px;
}

.apps svg {
    width: 32px;
    height: 32px;
}

.apps .open {
    border: 1px solid #7e8780;
    background-color: #4b554d;
}

.apps .stacked {
    width: 53px;
    margin-right: 5px;
    box-shadow: 1px 0 #20281f, 4px 0 #566058, 5px 0 #7e8780;
}

.apps .yandex {
    border-color: #c8bf70;
    background: linear-gradient(#918a35, #956235);
}

.apps .orange {
    border-color: #f3cf40;
    background: linear-gradient(#d9c520, #e39a18 60%, #d87420);
}

.apps .active {
    border-color: #fff;
    background: linear-gradient(#727a74, #8b928d);
    box-shadow: 1px 0 #20281f, 4px 0 #808782, 5px 0 #fff;
}

.tray {
    display: flex;
    align-items: center;
    margin-left: auto;
}

.tray .caret {
    width: 8px;
    height: 4px;
    margin-right: 16px;
}

.lang {
    font-size: 12px;
}

.clock {
    display: flex;
    flex-direction: column;
    width: 76px;
    margin-left: 11px;
    text-align: center;
    line-height: 22px;
}

.notify {
    position: relative;
    width: 48px;
    height: 48px;
    margin-right: 15px;
}

.notify svg {
    width: 16px;
    height: 16px;
}

.badge {
    position: absolute;
    top: 22px;
    left: 23px;
    width: 17px;
    height: 17px;
    border: 1px solid #909090;
    border-radius: 50%;
    background-color: #303128;
    font-weight: bold;
    line-height: 15px;
    text-align: center;
}
```
